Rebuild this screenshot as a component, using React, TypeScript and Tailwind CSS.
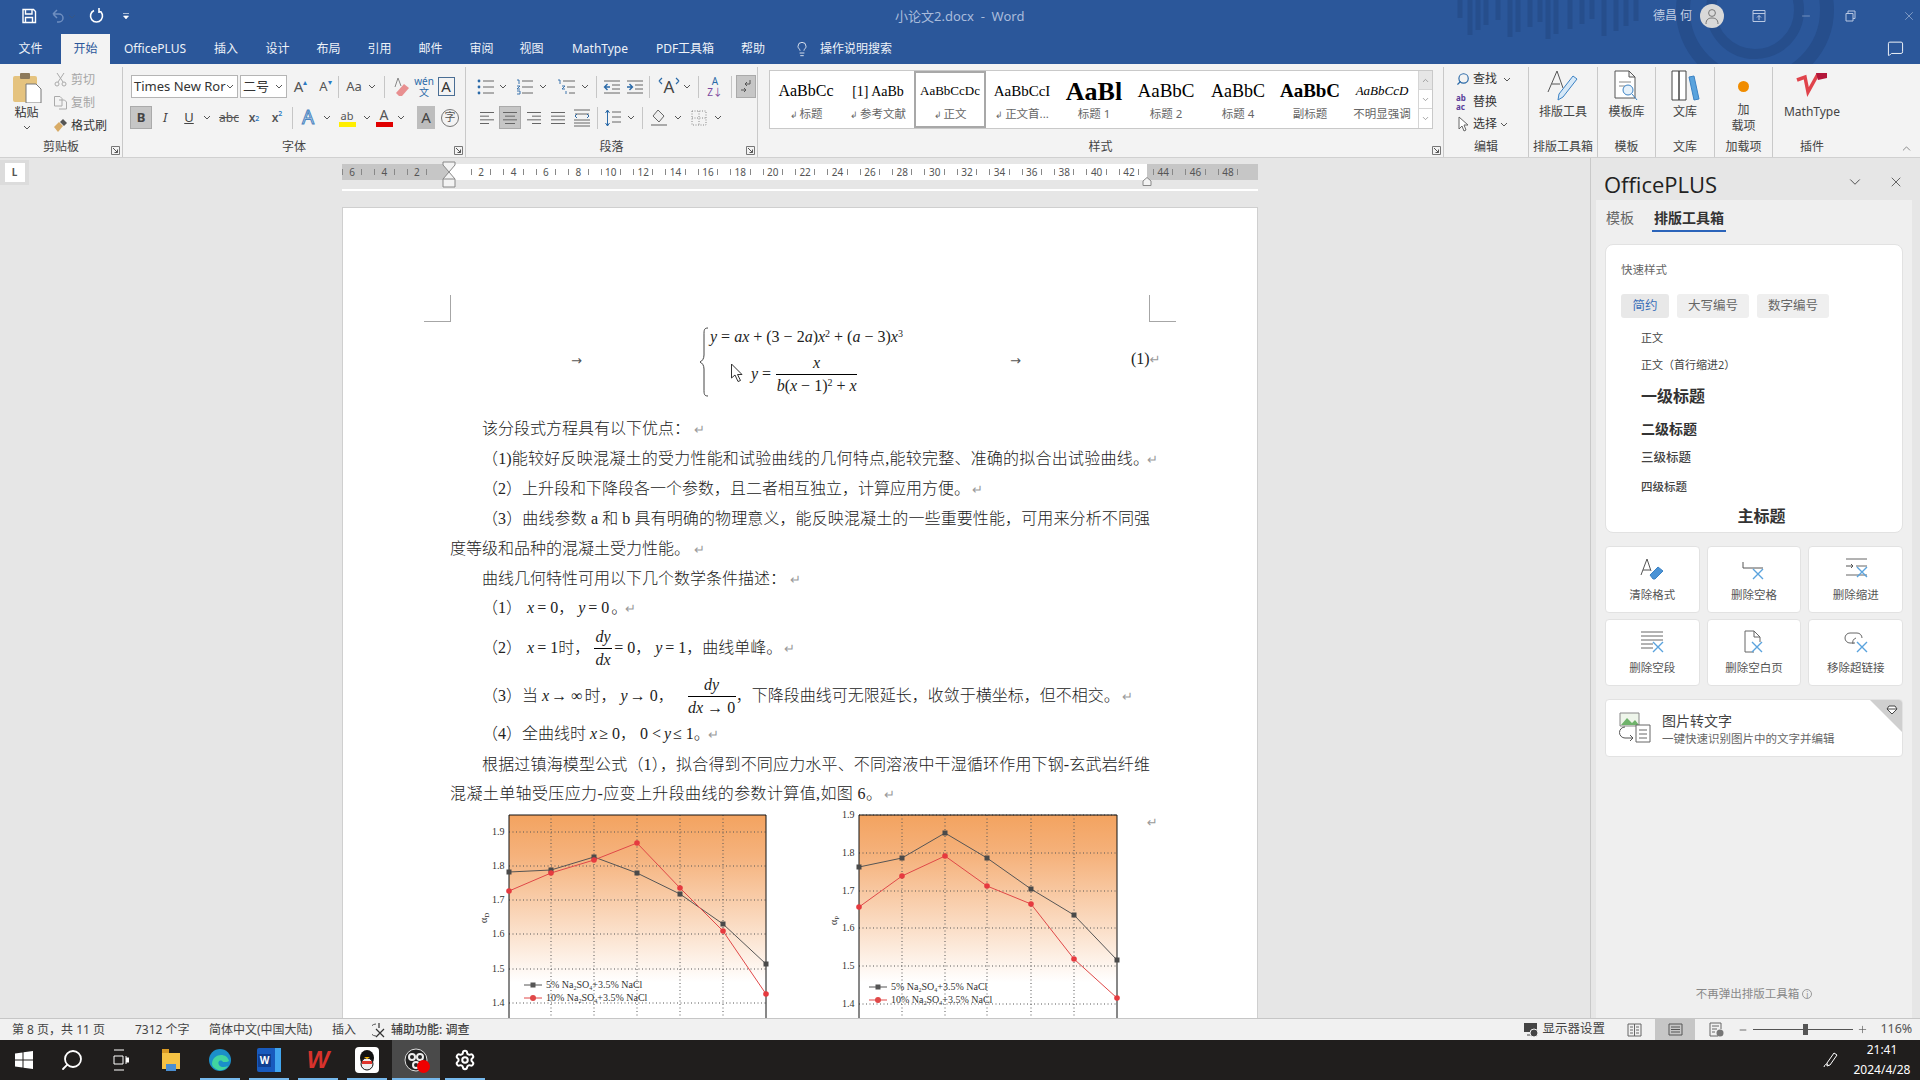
import React from 'react';
import { ChevronDown, ChevronUp, Lightbulb, MessageSquare, Minus, Plus, Search, Settings, X } from 'lucide-react';

const serif = "[font-family:'Liberation_Serif','Noto_Sans_CJK_SC',serif]";

const Chev: React.FC<{ className?: string }> = ({ className = '' }) => (
  <svg width="8" height="5" viewBox="0 0 8 5" className={className}><path d="M1 1l3 3 3-3" fill="none" stroke="#555" strokeWidth="1" /></svg>
);

const Cell: React.FC<{ className?: string; children?: React.ReactNode }> = ({ className = '', children }) => (
  <div className={`h-[23px] shrink-0 flex items-center justify-center ${className}`}>{children}</div>
);

const Sep = () => <div className="w-px h-[22px] bg-[#c6c6c6] shrink-0" />;

const Lines: React.FC<{ rows: [number, number][]; color?: string }> = ({ rows, color = '#666' }) => (
  <svg width="16" height="16" viewBox="0 0 16 16">
    {rows.map(([a, b], i) => (
      <path key={i} d={`M${a} ${2.5 + i * (11 / (rows.length - 1))}H${b}`} stroke={color} strokeWidth="1" />
    ))}
  </svg>
);

const Launcher = () => (
  <svg width="9" height="9" viewBox="0 0 9 9" className="absolute right-[2px] bottom-[2px]">
    <path d="M.5 .5H8.5V8.5H.5Z" fill="none" stroke="#777" />
    <path d="M2 2l4.5 4.5M6.5 3.5v3h-3" fill="none" stroke="#555" />
  </svg>
);

const Group: React.FC<{ className: string; label: string; launcher?: boolean; children: React.ReactNode }> = ({ className, label, launcher, children }) => (
  <div className={`relative shrink-0 h-full flex flex-col border-r border-[#c9c9c9] ${className}`}>
    <div className="flex-1 min-h-0">{children}</div>
    <div className="h-[20px] shrink-0 text-center text-[12px] leading-[20px] text-[#444]">{label}</div>
    {launcher && <Launcher />}
  </div>
);

const StyleItem: React.FC<{ preview: string; label: string; mark?: boolean; selected?: boolean; previewClass?: string }> = ({ preview, label, mark, selected, previewClass = 'text-[15px]' }) => (
  <div className={`w-[72px] h-full shrink-0 flex flex-col items-center overflow-hidden ${selected ? 'border-2 border-[#a8a8a8]' : 'border-2 border-transparent'}`}>
    <div className={`h-[30px] mt-[3px] w-[64px] overflow-hidden whitespace-nowrap flex items-center justify-center text-black ${serif} ${previewClass}`}>{preview}</div>
    <div className="text-[11.5px] leading-[16px] whitespace-nowrap text-[#666]">{mark && <span className="text-[9px] mr-[2px]">↲</span>}{label}</div>
  </div>
);

const BigBtn: React.FC<{ icon: React.ReactNode; children: React.ReactNode }> = ({ icon, children }) => (
  <div className="h-full flex flex-col items-center pt-[3px]">
    <div className="h-[32px] flex items-end justify-center">{icon}</div>
    <div className="mt-[2px] text-[12px] leading-[15px] text-[#444] text-center whitespace-nowrap">{children}</div>
  </div>
);

const TABS = [
  ['文件', 'w-[61px]'], ['开始', 'w-[49px]'], ['OfficePLUS', 'w-[90px]'], ['插入', 'w-[52px]'], ['设计', 'w-[51px]'], ['布局', 'w-[51px]'],
  ['引用', 'w-[51px]'], ['邮件', 'w-[51px]'], ['审阅', 'w-[51px]'], ['视图', 'w-[49px]'], ['MathType', 'w-[88px]'], ['PDF工具箱', 'w-[82px]'], ['帮助', 'w-[54px]'],
];

const TitleBar = () => (
  <div className="relative h-[64px] shrink-0 bg-[#2b579a] text-white">
    <svg width="460" height="64" viewBox="0 0 460 64" className="absolute left-[1420px] top-0">
      <g stroke="#264e8c" fill="none">
        {[40, 50, 58, 66, 78, 90, 98, 110, 120, 128, 136, 150, 162, 172, 184, 196, 206, 216].map((x, i) => (
          <path key={x} d={`M${x} 0V${18 + ((i * 17) % 22)}`} strokeWidth="5" />
        ))}
        <circle cx="335" cy="10" r="72" strokeWidth="14" />
        <circle cx="335" cy="10" r="44" strokeWidth="10" />
      </g>
    </svg>
    <div className="relative h-[32px] flex items-center">
      <svg width="16" height="16" viewBox="0 0 16 16" className="ml-[21px]"><path d="M2 1.5H12.5L14.5 3.5V14.5H2ZM4.5 1.5V6H11V1.5M4.5 14.5V9.5H11.5V14.5" fill="none" stroke="#fff" strokeWidth="1.4" /></svg>
      <svg width="16" height="16" viewBox="0 0 16 16" className="ml-[13px]"><path d="M3 6l4-4M3 6l4 4M3 6h6a4 4 0 0 1 0 8H7" fill="none" stroke="#6f8fc0" strokeWidth="1.5" /></svg>
      <Chev className="ml-[2px] opacity-30" />
      <svg width="16" height="18" viewBox="0 0 16 18" className="ml-[13px]"><path d="M5 3.5a6 6 0 1 0 5 0M10 1v5" fill="none" stroke="#fff" strokeWidth="1.6" /></svg>
      <svg width="8" height="8" viewBox="0 0 8 8" className="ml-[17px]"><path d="M1 1.5H7M1.5 4H6.5L4 7Z" fill="#fff" stroke="#fff" strokeWidth=".6" /></svg>
      <div className="ml-[765px] mt-[1px] text-[13px] text-[#a9bcdc] whitespace-nowrap w-[125px] text-center">小论文2.docx&nbsp; -&nbsp; Word</div>
      <div className="ml-[625px] text-[12px] text-[#c3cfe4] w-[55px] text-center whitespace-nowrap">德昌 何</div>
      <div className="w-[24px] h-[24px] rounded-full bg-[#d9d9d9] flex items-center justify-center">
        <svg width="16" height="18" viewBox="0 0 16 18"><circle cx="8" cy="6" r="3.4" fill="none" stroke="#777" /><path d="M2 17c0-5 3-6 6-6s6 1 6 6" fill="none" stroke="#777" /></svg>
      </div>
      <svg width="14" height="14" viewBox="0 0 14 14" className="ml-[28px]"><path d="M1 1.5H13V12.5H1ZM1 4.5H13M7 11V6.5M5 8.5l2-2 2 2" fill="none" stroke="#b9c8e2" /></svg>
      <Minus size={12} strokeWidth={1} className="ml-[34px] text-[#b9c8e2]" />
      <svg width="11" height="12" viewBox="0 0 11 12" className="ml-[33px]"><path d="M1 3.5H8V11H1ZM3 3.5V1H10V8.5H8" fill="none" stroke="#b9c8e2" /></svg>
      <X size={14} strokeWidth={1} className="ml-[46px] text-[#b9c8e2]" />
    </div>
    <div className="relative h-[32px] flex items-end text-[12px]">
      {TABS.map(([t, w], i) => (
        <div key={t} className={`${w} h-[30px] shrink-0 flex items-center justify-center whitespace-nowrap ${i === 1 ? 'bg-[#f3f3f3] text-[#2b579a]' : 'text-[#eef2f8]'}`}>{t}</div>
      ))}
      <Lightbulb size={16} strokeWidth={1.2} className="ml-[14px] mb-[7px] text-white" />
      <div className="ml-[10px] h-[30px] flex items-center text-[#eef2f8] whitespace-nowrap">操作说明搜索</div>
      <MessageSquare size={17} strokeWidth={1.3} className="ml-[995px] mb-[7px] text-white" />
    </div>
  </div>
);

const ClipboardGroup = () => (
  <Group className="w-[123px]" label="剪贴板" launcher>
    <div className="flex h-full">
      <div className="w-[53px] flex flex-col items-center pt-[6px]">
        <svg width="30" height="30" viewBox="0 0 30 30">
          <rect x="1" y="3" width="24" height="26" rx="2" fill="#e5c37f" />
          <rect x="8" y="0" width="10" height="6" rx="1" fill="#8d7a5c" />
          <path d="M14 11H24L29 16V30H14Z" fill="#fff" stroke="#777" />
        </svg>
        <div className="text-[12px] leading-[16px] mt-[2px] text-[#333]">粘贴</div>
        <Chev className="mt-[4px]" />
      </div>
      <div className="flex flex-col pt-[1px] text-[12px] text-[#a6a6a6]">
        <div className="h-[23px] flex items-center gap-[3px]"><svg width="15" height="15" viewBox="0 0 15 15"><path d="M4 1l6 9M11 1L5 10" stroke="#aaa" /><circle cx="4" cy="12" r="2" fill="none" stroke="#aaa" /><circle cx="11" cy="12" r="2" fill="none" stroke="#aaa" /></svg>剪切</div>
        <div className="h-[23px] flex items-center gap-[3px]"><svg width="15" height="15" viewBox="0 0 15 15"><path d="M1.5 1.5H7L9 3.5V11H1.5ZM6 5H11.5L13.500 7V14H6" fill="#f3f3f3" stroke="#aaa" /></svg>复制</div>
        <div className="h-[23px] flex items-center gap-[3px] text-[#333]"><svg width="15" height="15" viewBox="0 0 15 15"><path d="M1 9l5-5 4 4-5 6z" fill="#d8ab66" /><path d="M7 4l3-3 4 4-3 3z" fill="#555" /></svg>格式刷</div>
      </div>
    </div>
  </Group>
);

const FontGroup = () => (
  <Group className="w-[343px]" label="字体" launcher>
    <div className="flex items-center pl-[8px] pt-[8px]">
      <div className="w-[107px] h-[23px] bg-white border border-[#b5b5b5] flex items-center justify-between pl-[2px] pr-[3px] text-[13px] text-[#333] whitespace-nowrap overflow-hidden">Times New Ror<Chev /></div>
      <div className="w-[47px] h-[23px] ml-[2px] bg-white border border-[#b5b5b5] flex items-center justify-between pl-[2px] pr-[3px] text-[13px] text-[#333]">二号<Chev /></div>
      <Cell className="w-[25px] ml-[1px] text-[15px] text-[#555]">A<span className="text-[8px] text-[#2b79c2] -mt-[10px]">▴</span></Cell>
      <Cell className="w-[25px] text-[13px] text-[#555]">A<span className="text-[8px] text-[#2b79c2] -mt-[10px]">▾</span></Cell>
      <Sep />
      <div className="w-[3px]" />
      <Cell className="w-[24px] text-[13px] text-[#555]">Aa</Cell>
      <Cell className="w-[12px]"><Chev /></Cell>
      <div className="w-[6px]" /><Sep /><div className="w-[6px]" />
      <Cell className="w-[22px]">
        <svg width="18" height="20" viewBox="0 0 18 20"><path d="M2 10L5 1L8 9" fill="none" stroke="#888" /><path d="M3 16l8-9 5 4-7 8H6z" fill="#e88f90" /></svg>
      </Cell>
      <Cell className="w-[22px] flex-col text-[#2b6aa8]"><span className="text-[10px] leading-[11px]">wén</span><span className="text-[10px] leading-[11px]">文</span></Cell>
      <Cell className="w-[22px]"><div className="w-[17px] h-[19px] border border-[#4a6e94] flex items-center justify-center text-[15px] text-[#333]">A</div></Cell>
    </div>
    <div className="flex items-center pl-[7px] mt-[8px]">
      <Cell className="w-[22px] bg-[#c6c6c6] border border-[#aaa] text-[13px] font-bold text-[#444]">B</Cell>
      <Cell className="w-[26px] italic text-[13px] text-[#444]">I</Cell>
      <Cell className="w-[22px] underline text-[13px] text-[#444]">U</Cell>
      <Cell className="w-[14px]"><Chev /></Cell>
      <Cell className="w-[30px] line-through text-[12px] text-[#555]">abc</Cell>
      <Cell className="w-[20px] text-[12px] font-semibold text-[#555]">x<sub className="text-[7px] text-[#2b79c2]">2</sub></Cell>
      <Cell className="w-[26px] text-[12px] font-semibold text-[#555]">x<sup className="text-[7px] text-[#2b79c2]">2</sup></Cell>
      <div className="w-[2px]" /><Sep /><div className="w-[4px]" />
      <Cell className="w-[22px] text-[19px] leading-none text-[#dceaf8] [-webkit-text-stroke:1px_#4a84c0]">A</Cell>
      <Cell className="w-[15px]"><Chev /></Cell>
      <Cell className="w-[26px] flex-col leading-[13px] text-[11px] text-[#555]">ab<div className="w-[17px] h-[5px] bg-[#ffee00]" /></Cell>
      <Cell className="w-[14px]"><Chev /></Cell>
      <Cell className="w-[20px] flex-col leading-[14px] text-[14px] text-[#555]">A<div className="w-[17px] h-[5px] bg-[#e00000]" /></Cell>
      <Cell className="w-[14px]"><Chev /></Cell>
      <div className="w-[9px]" />
      <Cell className="w-[18px] bg-[#bdbdbd] text-[15px] text-[#444]">A</Cell>
      <div className="w-[3px]" />
      <Cell className="w-[24px]"><div className="w-[18px] h-[18px] rounded-full border border-[#777] flex items-center justify-center text-[11px] text-[#555]">字</div></Cell>
    </div>
  </Group>
);

const ParagraphGroup = () => (
  <Group className="w-[292px]" label="段落" launcher>
    <div className="flex items-center pl-[11px] pt-[8px]">
      <Cell className="w-[18px]"><svg width="18" height="16" viewBox="0 0 18 16"><circle cx="2" cy="2" r="1.4" fill="#2b6aa8" /><circle cx="2" cy="8" r="1.4" fill="#2b6aa8" /><circle cx="2" cy="14" r="1.4" fill="#2b6aa8" /><path d="M6 2H17M6 8H17M6 14H17" stroke="#666" /></svg></Cell>
      <Cell className="w-[16px]"><Chev /></Cell>
      <div className="w-[4px]" />
      <Cell className="w-[20px]"><svg width="18" height="16" viewBox="0 0 18 16"><path d="M1 1H3V5M1 7H4L1 10H4M1 12H4V15H1" fill="none" stroke="#2b6aa8" strokeWidth=".9" /><path d="M6 2H17M6 8H17M6 14H17" stroke="#666" /></svg></Cell>
      <Cell className="w-[16px]"><Chev /></Cell>
      <div className="w-[5px]" />
      <Cell className="w-[22px]"><svg width="20" height="16" viewBox="0 0 20 16"><path d="M1 1H3V5M5 7H8L5 10H8M9 12V15" fill="none" stroke="#2b6aa8" strokeWidth=".9" /><path d="M6 2H18M10 8H18M12 14H18" stroke="#666" /></svg></Cell>
      <Cell className="w-[14px]"><Chev /></Cell>
      <div className="w-[4px]" /><Sep /><div className="w-[4px]" />
      <Cell className="w-[21px]"><svg width="18" height="16" viewBox="0 0 18 16"><path d="M1 2H17M9 6H17M9 10H17M1 14H17" stroke="#666" /><path d="M7 8H2M4.5 5L1.5 8l3 3" fill="none" stroke="#2b6aa8" strokeWidth="1.4" /></svg></Cell>
      <div className="w-[2px]" />
      <Cell className="w-[21px]"><svg width="18" height="16" viewBox="0 0 18 16"><path d="M1 2H17M9 6H17M9 10H17M1 14H17" stroke="#666" /><path d="M1 8H6M3.5 5l3 3-3 3" fill="none" stroke="#2b6aa8" strokeWidth="1.4" /></svg></Cell>
      <div className="w-[4px]" /><Sep /><div className="w-[8px]" />
      <Cell className="w-[22px] relative text-[17px] text-[#444]">A<svg width="22" height="8" viewBox="0 0 22 8" className="absolute top-[2px] left-0"><path d="M1 4l3-3M1 4l3 3M21 4l-3-3M21 4l-3 3" fill="none" stroke="#2b6aa8" strokeWidth="1.2" /></svg></Cell>
      <Cell className="w-[14px]"><Chev /></Cell>
      <div className="w-[4px]" /><Sep /><div className="w-[5px]" />
      <Cell className="w-[22px] flex-col text-[10px] text-[#2b6aa8]"><span className="leading-[11px]">A</span><span className="leading-[11px] text-[#7a4aa0]">Z↓</span></Cell>
      <div className="w-[5px]" /><Sep /><div className="w-[4px]" />
      <Cell className="w-[20px] bg-[#c6c6c6] border border-[#aaa]"><svg width="14" height="16" viewBox="0 0 14 16"><path d="M11 1V5H6M8 3L6 5l2 2M2 11H7M5 9l2 2-2 2" fill="none" stroke="#555" /></svg></Cell>
    </div>
    <div className="flex items-center pl-[10px] mt-[8px]">
      <Cell className="w-[22px]"><Lines rows={[[1, 15], [1, 10], [1, 15], [1, 10]]} /></Cell>
      <div className="w-[1px]" />
      <Cell className="w-[22px] bg-[#c6c6c6] border border-[#aaa]"><Lines rows={[[1, 15], [3, 13], [1, 15], [3, 13]]} /></Cell>
      <div className="w-[2px]" />
      <Cell className="w-[22px]"><Lines rows={[[1, 15], [6, 15], [1, 15], [6, 15]]} /></Cell>
      <div className="w-[2px]" />
      <Cell className="w-[22px]"><Lines rows={[[1, 15], [1, 15], [1, 15], [1, 15]]} /></Cell>
      <div className="w-[2px]" />
      <Cell className="w-[22px]"><svg width="18" height="18" viewBox="0 0 18 18"><path d="M1 1H17M1 11H17M1 14H17M1 17H17M2 5H16" stroke="#666" /><path d="M4 5l-2 2 2 2M14 5l2 2-2 2" fill="none" stroke="#2b6aa8" /></svg></Cell>
      <div className="w-[4px]" /><Sep /><div className="w-[4px]" />
      <Cell className="w-[22px]"><svg width="18" height="18" viewBox="0 0 18 18"><path d="M8 3H17M8 8H17M8 13H17" stroke="#666" /><path d="M3.5 1V17M1.5 4l2-3 2 3M1.5 14l2 3 2-3" fill="none" stroke="#2b6aa8" /></svg></Cell>
      <Cell className="w-[14px]"><Chev /></Cell>
      <div className="w-[4px]" /><Sep /><div className="w-[3px]" />
      <Cell className="w-[24px] justify-end"><svg width="20" height="18" viewBox="0 0 20 18"><path d="M8 1l6 6-5 6-6-6z" fill="#eee" stroke="#666" /><path d="M1 16H17" stroke="#aaa" strokeWidth="2" /></svg></Cell>
      <Cell className="w-[16px]"><Chev /></Cell>
      <div className="w-[2px]" />
      <Cell className="w-[22px]"><svg width="16" height="16" viewBox="0 0 16 16"><path d="M1 1H15V15H1ZM8 1V15M1 8H15" fill="none" stroke="#888" strokeDasharray="1 1.5" /></svg></Cell>
      <Cell className="w-[16px]"><Chev /></Cell>
    </div>
  </Group>
);

const StylesGroup = () => (
  <Group className="w-[686px]" label="样式" launcher>
    <div className="ml-[11px] mt-[3px] w-[664px] h-[59px] bg-white border border-[#c9c9c9] flex">
      <StyleItem preview="AaBbCc" label="标题" mark previewClass="text-[16px]" />
      <StyleItem preview="[1]  AaBb" label="参考文献" mark previewClass="text-[14px]" />
      <StyleItem preview="AaBbCcDc" label="正文" mark selected previewClass="text-[13px]" />
      <StyleItem preview="AaBbCcI" label="正文首..." mark previewClass="text-[15px]" />
      <StyleItem preview="AaBl" label="标题 1" previewClass="text-[26px] font-bold" />
      <StyleItem preview="AaBbC" label="标题 2" previewClass="text-[19px]" />
      <StyleItem preview="AaBbC" label="标题 4" previewClass="text-[18px]" />
      <StyleItem preview="AaBbC" label="副标题" previewClass="text-[19px] font-bold" />
      <StyleItem preview="AaBbCcD" label="不明显强调" previewClass="text-[13px] italic text-[#666]" />
      <div className="ml-auto w-[15px] border-l border-[#d5d5d5] flex flex-col text-[#888]">
        <div className="h-[19px] bg-[#e6e6e6] flex items-center justify-center border-b border-[#d5d5d5]"><ChevronUp size={9} /></div>
        <div className="h-[19px] flex items-center justify-center border-b border-[#d5d5d5]"><ChevronDown size={9} /></div>
        <div className="h-[19px] flex items-center justify-center"><ChevronDown size={9} /></div>
      </div>
    </div>
  </Group>
);

const EditGroup = () => (
  <Group className="w-[85px]" label="编辑">
    <div className="flex flex-col pt-[1px] pl-[12px] text-[12px] text-[#333]">
      <div className="h-[22px] flex items-center gap-[3px]"><Search size={14} strokeWidth={2} className="text-[#2b6aa8] -scale-x-100" />查找<Chev className="ml-[3px]" /></div>
      <div className="h-[23px] flex items-center gap-[3px]"><span className="w-[14px] text-[8px] leading-[9px] text-[#5a3d9a] font-bold">ab<br />ac</span>替换</div>
      <div className="h-[22px] flex items-center gap-[3px]"><svg width="14" height="16" viewBox="0 0 14 16"><path d="M3 1V13L6 10L8 15L10 14L8 9H12Z" fill="#fff" stroke="#666" /></svg>选择<Chev /></div>
    </div>
  </Group>
);

const RibbonAddins = () => (
  <>
    <Group className="w-[69px]" label="排版工具箱">
      <BigBtn icon={<svg width="34" height="32" viewBox="0 0 34 32"><path d="M2 22L11 1L17 18" fill="none" stroke="#555" /><path d="M6 14H14" stroke="#555" /><path d="M27 6l4 3-14 18-5 3 1-6z" fill="#d6e8f7" stroke="#3b82c4" /></svg>}>排版工具</BigBtn>
    </Group>
    <Group className="w-[58px]" label="模板">
      <BigBtn icon={<svg width="28" height="32" viewBox="0 0 28 32"><path d="M2 1H16L22 7V28H2ZM16 1V7H22" fill="#fff" stroke="#555" /><path d="M6 12H18M6 16H12" stroke="#888" /><circle cx="15" cy="20" r="5" fill="#e6f1fa" stroke="#3b82c4" /><path d="M19 24l5 6" stroke="#3b82c4" /></svg>}>模板库</BigBtn>
    </Group>
    <Group className="w-[59px]" label="文库">
      <BigBtn icon={<svg width="30" height="32" viewBox="0 0 30 32"><path d="M2 1H9V30H2ZM9 1H16V30H9Z" fill="#fff" stroke="#444" /><path d="M19 7l5-1 5 23-5 1z" fill="#5aa3dd" stroke="#3b82c4" /></svg>}>文库</BigBtn>
    </Group>
    <Group className="w-[58px]" label="加载项">
      <div className="flex flex-col items-center pt-[14px] text-[12px] leading-[16px] text-[#444]">
        <div className="w-[11px] h-[11px] rounded-full bg-[#f08c00] mb-[10px]" />
        <span>加</span><span>载项</span>
      </div>
    </Group>
    <Group className="w-[78px] border-r-0" label="插件">
      <BigBtn icon={<svg width="36" height="32" viewBox="0 0 36 32"><path d="M3 10L11 7L14 22L24 4" fill="none" stroke="#e0434b" strokeWidth="3.5" /><path d="M22 3H33V8L24 10Z" fill="#b3163a" /></svg>}>MathType</BigBtn>
    </Group>
  </>
);

const Ribbon = () => (
  <div className="relative h-[94px] shrink-0 bg-[#f3f3f3] border-b border-[#d0d0d0] flex pt-[3px]">
    <ClipboardGroup />
    <FontGroup />
    <ParagraphGroup />
    <StylesGroup />
    <EditGroup />
    <RibbonAddins />
    <ChevronUp size={13} strokeWidth={1.2} className="absolute right-[7px] bottom-[2px] text-[#555]" />
  </div>
);

const RulerCell: React.FC<{ n: number }> = ({ n }) => (
  <div className="w-[32.4px] shrink-0 flex items-center justify-between px-[6px] text-[10px] text-[#555]">
    <div className="w-px h-[6px] bg-[#888]" />
    <span className="leading-none">{n}</span>
    <div className="w-px h-[6px] bg-[#888]" />
  </div>
);

const Ruler = () => (
  <div className="relative w-[916px] h-[16px] flex">
    <div className="w-[107px] bg-[#c6c6c6] flex justify-end pr-[16px]">
      {[6, 4, 2].map(n => <RulerCell key={n} n={n} />)}
    </div>
    <div className="w-[698px] bg-white flex pl-[16px] overflow-hidden">
      {Array.from({ length: 21 }, (_, i) => (i + 1) * 2).map(n => <RulerCell key={n} n={n} />)}
    </div>
    <div className="flex-1 bg-[#c6c6c6] flex">
      {[44, 46, 48].map(n => <RulerCell key={n} n={n} />)}
    </div>
    <svg width="14" height="27" viewBox="0 0 14 27" className="absolute left-[100px] -top-[3px]">
      <path d="M1 1H13V4L7 11L1 4ZM7 11L13 18V26H1V18ZM1 18H13" fill="#f3f3f3" stroke="#888" />
    </svg>
    <svg width="10" height="9" viewBox="0 0 10 9" className="absolute left-[800px] top-[13px]">
      <path d="M5 .5L9 4V8.500H1V4Z" fill="#f3f3f3" stroke="#888" />
    </svg>
    <div className="absolute left-0 right-0 -bottom-[11px] h-[2px] bg-white" />
  </div>
);

const Ret: React.FC<{ className?: string }> = ({ className = '' }) => (
  <span className={`text-[#9a9a9a] text-[13px] leading-none [font-family:'DejaVu_Sans',sans-serif] ${className}`}>↵</span>
);

const M: React.FC<{ className?: string; children: React.ReactNode }> = ({ className = '', children }) => (
  <span className={`italic text-[16px] text-[#222] ${className}`}>{children}</span>
);

const N: React.FC<{ className?: string; children: React.ReactNode }> = ({ className = '', children }) => (
  <span className={`text-[16px] text-[#222] ${className}`}>{children}</span>
);

const Frac: React.FC<{ top: React.ReactNode; bottom: React.ReactNode; className?: string }> = ({ top, bottom, className = '' }) => (
  <span className={`inline-flex flex-col items-center shrink-0 ${className}`}>
    <span className="leading-[21px] h-[22px] whitespace-nowrap">{top}</span>
    <span className="self-stretch h-px bg-black" />
    <span className="leading-[22px] h-[22px] whitespace-nowrap">{bottom}</span>
  </span>
);

const Equation = () => (
  <div className="relative h-[89px] flex items-center text-[#222]">
    <span className="absolute left-[228px] top-[26px] text-[13px] text-[#555] [font-family:'DejaVu_Sans',sans-serif]">→</span>
    <div className="ml-[356px] flex items-stretch h-[70px] mt-[-16px]">
      <svg width="10" height="70" viewBox="0 0 10 70"><path d="M9 1C5 1 5 3 5 8V28C5 32 3 34 1 35C3 36 5 38 5 42V62C5 67 5 69 9 69" fill="none" stroke="#444" /></svg>
      <div className="flex flex-col pl-[1px]">
        <div className="h-[25px] -mt-[3px] text-[16px] whitespace-nowrap leading-[25px]"><i>y</i> = <i>ax</i> + (3 − 2<i>a</i>)<i>x</i><sup className="text-[10px]">2</sup> + (<i>a</i> − 3)<i>x</i><sup className="text-[10px]">3</sup></div>
        <div className="flex items-center mt-[3px] ml-[41px] text-[16px]">
          <span className="whitespace-nowrap mr-[5px]"><i>y</i> =</span>
          <Frac className="w-[81px]" top={<i>x</i>} bottom={<><i>b</i>(<i>x</i> − 1)<sup className="text-[10px]">2</sup> + <i>x</i></>} />
        </div>
      </div>
    </div>
    <span className="absolute left-[667px] top-[26px] text-[13px] text-[#555] [font-family:'DejaVu_Sans',sans-serif]">→</span>
    <span className="absolute left-[788px] top-[22px] text-[16px]">(1)<Ret /></span>
  </div>
);

const Para: React.FC<{ className?: string; children: React.ReactNode }> = ({ className = '', children }) => (
  <div className={`flex items-center whitespace-nowrap text-[16px] font-light text-[#222] ${className}`}>{children}</div>
);

const DocText = () => (
  <div className="pl-[107px] w-[815px]">
    <Para className="h-[30px] pl-[32px]">该分段式方程具有以下优点：<Ret className="ml-[4px]" /></Para>
    <Para className="h-[30px] pl-[32px]"><span className="w-[668px] [text-align-last:justify]">（1)能较好反映混凝土的受力性能和试验曲线的几何特点,能较完整、准确的拟合出试验曲线。</span><Ret className="ml-[-2px]" /></Para>
    <Para className="h-[30px] pl-[32px]">（2）上升段和下降段各一个参数，且二者相互独立，计算应用方便。<Ret className="ml-[2px]" /></Para>
    <Para className="h-[30px] pl-[32px]"><span className="w-[668px] [text-align-last:justify]">（3）曲线参数 a 和 b 具有明确的物理意义，能反映混凝土的一些重要性能，可用来分析不同强</span></Para>
    <Para className="h-[30px]">度等级和品种的混凝土受力性能。<Ret className="ml-[4px]" /></Para>
    <Para className="h-[30px] pl-[32px]">曲线几何特性可用以下几个数学条件描述：<Ret className="ml-[4px]" /></Para>
    <Para className="h-[28px] pl-[32px]">（1）<M className={`ml-[5px] ${serif}`}>x</M><N className={`ml-[3px] ${serif}`}>= 0</N>，<M className={`ml-[4px] ${serif}`}>y</M><N className={`ml-[3px] ${serif}`}>= 0</N><span className="ml-[2px]">。</span><Ret className="ml-[-2px]" /></Para>
    <Para className="h-[52px] pl-[32px]">（2）<M className={`ml-[5px] ${serif}`}>x</M><N className={`ml-[3px] ${serif}`}>= 1</N>时，
      <Frac className={`w-[18px] ml-[4px] text-[16px] italic ${serif}`} top="dy" bottom="dx" /><N className={`ml-[2px] ${serif}`}>= 0</N>，<M className={`ml-[4px] ${serif}`}>y</M><N className={`ml-[3px] ${serif}`}>= 1</N>，曲线单峰。<Ret className="ml-[2px]" /></Para>
    <Para className="h-[44px] pl-[32px]">（3）当<M className={`ml-[4px] ${serif}`}>x</M><N className={`mx-[2px] ${serif}`}>→ ∞</N>时，<M className={`ml-[4px] ${serif}`}>y</M><N className={`ml-[2px] ${serif}`}>→ 0</N>，
      <Frac className={`w-[48px] ml-[14px] text-[16px] ${serif}`} top={<i>dy</i>} bottom={<><i>dx</i> → 0</>} />，下降段曲线可无限延长，收敛于横坐标，但不相交。<Ret className="ml-[2px]" /></Para>
    <Para className="h-[32px] pl-[32px]">（4）全曲线时<M className={`ml-[4px] ${serif}`}>x</M><N className={`ml-[2px] ${serif}`}>≥ 0</N>，<N className={`ml-[4px] ${serif}`}>0 &lt;</N><M className={`ml-[3px] ${serif}`}>y</M><N className={`ml-[2px] ${serif}`}>≤ 1</N>。<Ret className="ml-[-2px]" /></Para>
    <Para className="h-[30px] pl-[32px]"><span className="w-[668px] [text-align-last:justify]">根据过镇海模型公式（1），拟合得到不同应力水平、不同溶液中干湿循环作用下钢-玄武岩纤维</span></Para>
    <Para className="h-[28px]"><span className="w-[432px] [text-align-last:justify]">混凝土单轴受压应力-应变上升段曲线的参数计算值,如图 6。</span><Ret className="ml-[2px]" /></Para>
  </div>
);

type ChartProps = {
  id: string; xs: number[]; black: number[]; red: number[]; ticks: number[]; axis: string; axisY: number; legX: number; legY: number; labelX: number;
};

const Legend: React.FC<{ x: number; y: number; label: string; color: string; circle?: boolean }> = ({ x, y, label, color, circle }) => (
  <g>
    <path d={`M${x} ${y}H${x + 18}`} stroke={color} />
    {circle ? <circle cx={x + 9} cy={y} r="3" fill={color} /> : <rect x={x + 6.5} y={y - 2.5} width="5" height="5" fill={color} />}
    <text x={x + 22} y={y + 3} fontSize="10" fill="#333" fontFamily="Liberation Serif">{label}<tspan fontSize="6" dy="2">2</tspan><tspan dy="-2">SO</tspan><tspan fontSize="6" dy="2">4</tspan><tspan dy="-2">+3.5% NaCl</tspan></text>
  </g>
);

const Chart: React.FC<ChartProps> = ({ id, xs, black, red, ticks, axis, axisY, legX, legY, labelX }) => {
  const w = xs[xs.length - 1];
  const pts = (ys: number[]) => ys.map((y, i) => `${xs[i]},${y}`).join(' ');
  return (
    <svg width="300" height="204" viewBox="-39 -1 300 204" className="shrink-0 overflow-visible">
      <defs>
        <linearGradient id={id} x1="0" y1="0" x2="0" y2="1">
          <stop offset="0" stopColor="#f3a360" />
          <stop offset=".2" stopColor="#f5b27c" />
          <stop offset=".82" stopColor="#ffffff" />
        </linearGradient>
      </defs>
      <rect x="0" y="0" width={w} height="204" fill={`url(#${id})`} />
      {xs.slice(1, -1).map(x => <path key={x} d={`M${x} 0V204`} stroke="#555" strokeDasharray="1 2.5" />)}
      {ticks.map(y => <path key={y} d={`M0 ${y}H${w}`} stroke="#555" strokeDasharray="1 2.5" />)}
      <path d={`M0 204V0H${w}V204`} fill="none" stroke="#111" />
      {ticks.map((y, i) => (
        <text key={y} x={labelX} y={y + 3} fontSize="10" fill="#333" fontFamily="Liberation Serif">{(1.9 - i / 10).toFixed(1)}</text>
      ))}
      <text x="-22" y={axisY} fontSize="10" fill="#333" fontFamily="Liberation Serif" transform={`rotate(-90 -22 ${axisY})`}>α<tspan fontSize="7" dy="2">{axis}</tspan></text>
      <polyline points={pts(black)} fill="none" stroke="#555" />
      <polyline points={pts(red)} fill="none" stroke="#e04848" />
      {black.map((y, i) => <rect key={i} x={xs[i] - 2.5} y={y - 2.5} width="5" height="5" fill="#4a4a4a" />)}
      {red.map((y, i) => <circle key={i} cx={xs[i]} cy={y} r="2.8" fill="#e63a3f" />)}
      <Legend x={legX} y={legY} label="5% Na" color="#555" />
      <Legend x={legX} y={legY + 13} label="10% Na" color="#e04848" circle />
    </svg>
  );
};

const Charts = () => (
  <div className="flex mt-[6px] pl-[127px] gap-[50px] relative">
    <Chart id="g1" xs={[0, 42, 85, 128, 171, 214, 257]} black={[57, 55, 42, 58, 79, 109, 149]} red={[76, 58, 45, 28, 73, 116, 179]}
      ticks={[17, 51, 85, 119, 154, 188]} axis="D" axisY={108} legX={15} legY={170} labelX={-17} />
    <Chart id="g2" xs={[0, 43, 86, 128, 172, 215, 258]} black={[52, 43, 18, 43, 74, 100, 145]} red={[92, 61, 41, 71, 89, 144, 183]}
      ticks={[0, 38, 76, 113, 151, 189]} axis="P" axisY={110} legX={10} legY={172} labelX={-17} />
    <Ret className="absolute left-[804px] top-[2px]" />
  </div>
);

const Page = () => (
  <div className={`relative mt-[11px] flex-1 w-[916px] bg-white border border-b-0 border-[#cfcfcf] overflow-hidden pt-[117px] ${serif}`}>
    <div className="absolute left-[81px] top-[87px] w-[27px] h-[27px] border-r border-b border-[#a6a6a6]" />
    <div className="absolute left-[806px] top-[87px] w-[27px] h-[27px] border-l border-b border-[#a6a6a6]" />
    <Equation />
    <DocText />
    <Charts />
    <svg width="14" height="20" viewBox="0 0 14 20" className="absolute left-[387px] top-[155px]"><path d="M1.5 1V15L5 12L8 18.5L10.5 17.5L7.5 11.5H12Z" fill="#fff" stroke="#333" /></svg>
  </div>
);

const DocArea = () => (
  <div className="relative flex-1 min-w-0 flex flex-col items-start pl-[342px] pt-[6px]">
    <div className="absolute left-0 top-[2px] w-[29px] h-[25px] bg-[#dcdcdc] flex items-center justify-center">
      <div className="w-[20px] h-[19px] bg-white flex items-center justify-center text-[10px] font-bold text-[#555]">L</div>
    </div>
    <Ruler />
    <div className="h-[16px]" />
    <Page />
  </div>
);

const ACTIONS: [string, React.ReactNode][] = [
  ['清除格式', <svg key="a" width="24" height="24" viewBox="0 0 24 24"><path d="M1 18L7 2L11 14" fill="none" stroke="#555" /><path d="M3 13H10" stroke="#555" /><path d="M10 18l8-8 5 4-8 8h-2z" fill="#4a93d6" stroke="#3b82c4" /></svg>],
  ['删除空格', <svg key="b" width="26" height="24" viewBox="0 0 26 24"><path d="M2 5V11H22" fill="none" stroke="#555" /><path d="M12 12l10 10M22 12L12 22" stroke="#5aa3dd" strokeWidth="1.4" /></svg>],
  ['删除缩进', <svg key="c" width="26" height="24" viewBox="0 0 26 24"><path d="M3 2H24M13 9H24M3 18H24" stroke="#666" /><path d="M3 9H10M8 7l2 2-2 2" fill="none" stroke="#555" /><path d="M14 10l10 10M24 10L14 20" stroke="#5aa3dd" strokeWidth="1.4" /></svg>],
  ['删除空段', <svg key="d" width="26" height="24" viewBox="0 0 26 24"><path d="M2 2H24M2 6H24M2 10H24M2 14H14M2 18H14" stroke="#666" /><path d="M14 12l10 10M24 12L14 22" stroke="#5aa3dd" strokeWidth="1.4" /></svg>],
  ['删除空白页', <svg key="e" width="26" height="24" viewBox="0 0 26 24"><path d="M13 22H4V1H13L19 7V12M13 1V7H19" fill="none" stroke="#666" /><path d="M11 12l10 10M21 12L11 22" stroke="#5aa3dd" strokeWidth="1.4" /></svg>],
  ['移除超链接', <svg key="f" width="26" height="24" viewBox="0 0 26 24"><path d="M12 13H7a5 5 0 0 1 0-10h7a5 5 0 0 1 5 5" fill="none" stroke="#666" /><path d="M13 8a5 5 0 0 0-3 6" fill="none" stroke="#666" /><path d="M14 12l10 10M24 12L14 22" stroke="#5aa3dd" strokeWidth="1.4" /></svg>],
];

const TaskPane = () => (
  <div className="w-[330px] shrink-0 border-l border-[#c9c9c9] flex flex-col pl-[5px] pr-[8px]">
    <div className="h-[42px] shrink-0 flex items-center pl-[8px] text-[#222]">
      <span className="text-[22px] leading-none mt-[10px] [font-family:'Open_Sans',sans-serif]">OfficePLUS</span>
      <ChevronDown size={18} strokeWidth={1} className="ml-auto mr-[-1px] mt-[6px]" />
      <X size={16} strokeWidth={1} className="ml-[25px] mr-[8px] mt-[6px]" />
    </div>
    <div className="flex-1 bg-[#efefef] pl-[9px] pr-[9px]">
      <div className="h-[32px] flex items-start pt-[8px] text-[14px] leading-[20px]">
        <span className="text-[#666] ml-px">模板</span>
        <div className="ml-[18px] w-[74px] h-[24px] border-b-2 border-[#2b64ba] text-center font-bold text-[#333]">排版工具箱</div>
      </div>
      <div className="mt-[12px] h-[289px] bg-white rounded-[8px] border border-[#e2e2e2] flex flex-col pl-[15px] text-[#444]">
        <div className="mt-[17px] h-[16px] text-[11.5px] leading-[16px] text-[#666]">快速样式</div>
        <div className="mt-[16px] flex gap-[8px] text-[12.5px]">
          <div className="w-[48px] h-[24px] rounded-[3px] bg-[#e8e8e8] text-[#3a6fb8] flex items-center justify-center">简约</div>
          <div className="w-[72px] h-[24px] rounded-[3px] bg-[#efefef] text-[#666] flex items-center justify-center">大写编号</div>
          <div className="w-[72px] h-[24px] rounded-[3px] bg-[#efefef] text-[#666] flex items-center justify-center">数字编号</div>
        </div>
        <div className="pl-[20px] mt-[8px]">
          <div className="h-[24px] flex items-center text-[11px]">正文</div>
          <div className="h-[30px] flex items-center text-[11px]">正文（首行缩进2）</div>
          <div className="h-[32px] flex items-center text-[16px] font-bold text-[#333]">一级标题</div>
          <div className="h-[32px] flex items-center text-[14px] font-bold text-[#333]">二级标题</div>
          <div className="h-[28px] flex items-center text-[12.5px] font-medium">三级标题</div>
          <div className="h-[30px] flex items-center text-[11.5px] font-medium">四级标题</div>
        </div>
        <div className="h-[28px] flex items-center justify-center text-[16px] font-bold text-[#333]">主标题</div>
      </div>
      <div className="mt-[13px] grid grid-cols-3 gap-x-[7px] gap-y-[6px]">
        {ACTIONS.map(([label, icon]) => (
          <div key={label} className="h-[67px] bg-white rounded-[4px] border border-[#e2e2e2] flex flex-col items-center pt-[8px]">
            <div className="h-[28px] flex items-center justify-center">{icon}</div>
            <div className="mt-[4px] text-[11.5px] leading-[16px] text-[#555] whitespace-nowrap">{label}</div>
          </div>
        ))}
      </div>
      <div className="relative mt-[13px] h-[58px] bg-white rounded-[4px] border border-[#e2e2e2] overflow-hidden flex items-center pl-[13px]">
        <svg width="32" height="32" viewBox="0 0 32 32" className="shrink-0">
          <path d="M1 1H20V14H1Z" fill="#eef5ea" stroke="#888" />
          <path d="M2 13l6-7 5 5 3-3 4 5z" fill="#6fb36b" />
          <path d="M17 13H31V30H17ZM20 18H28M20 22H28M20 26H28" fill="#fff" stroke="#666" />
          <path d="M6 15a5 5 0 0 0 0 11H14M11 23l3 3-3 3" fill="none" stroke="#555" />
        </svg>
        <div className="ml-[11px] flex flex-col">
          <span className="text-[14px] leading-[20px] text-[#444]">图片转文字</span>
          <span className="text-[11.5px] leading-[15px] text-[#666] whitespace-nowrap">一键快速识别图片中的文字并编辑</span>
        </div>
        <div className="absolute right-0 top-0 w-0 h-0 border-l-[32px] border-l-transparent border-t-[32px] border-t-[#cfcfcf]" />
        <svg width="12" height="10" viewBox="0 0 12 10" className="absolute right-[4px] top-[5px]"><path d="M3 1H9L11 4L6 9L1 4ZM1 4H11" fill="#fff" stroke="#444" /></svg>
      </div>
      <div className="mt-[228px] flex justify-center items-center gap-[3px] text-[11.5px] text-[#888]">不再弹出排版工具箱
        <span className="w-[10px] h-[10px] rounded-full border border-[#999] text-[8px] leading-[9px] text-center">i</span>
      </div>
    </div>
  </div>
);

const StatusBar = () => (
  <div className="h-[22px] shrink-0 bg-[#f1f1f1] border-t border-[#c6c6c6] flex items-center text-[12px] text-[#444] whitespace-nowrap">
    <span className="ml-[12px] w-[123px]">第 8 页，共 11 页</span>
    <span className="w-[74px]">7312 个字</span>
    <span className="w-[123px]">简体中文(中国大陆)</span>
    <span className="w-[40px]">插入</span>
    <svg width="15" height="16" viewBox="0 0 15 16"><path d="M4 2a6 6 0 0 0 0 12" fill="none" stroke="#555" /><path d="M7 1V6M4 7l8 8M12 7L4 15" stroke="#333" strokeWidth="1.2" /></svg>
    <span className="ml-[4px] font-medium">辅助功能: 调查</span>
    <svg width="17" height="16" viewBox="0 0 17 16" className="ml-[1054px]"><path d="M1 1H14V10H1Z" fill="#444" /><path d="M4 13H9" stroke="#444" /><circle cx="11" cy="11" r="4" fill="#444" stroke="#f1f1f1" /></svg>
    <span className="ml-[2px] w-[64px] text-[12.5px]">显示器设置</span>
    <svg width="15" height="14" viewBox="0 0 15 14" className="ml-[21px]"><path d="M1 1H7.5V13H1ZM7.5 1H14V13H7.5ZM3 4H6M3 7H6M3 10H6M9 4H12M9 7H12M9 10H12" fill="none" stroke="#666" /></svg>
    <div className="ml-[13px] w-[40px] h-[22px] bg-[#c6c6c6] flex items-center justify-center"><svg width="15" height="13" viewBox="0 0 15 13"><path d="M1 1H14V12H1ZM3 4H12M3 6.500H12M3 9H12" fill="none" stroke="#555" /></svg></div>
    <svg width="15" height="15" viewBox="0 0 15 15" className="ml-[14px]"><path d="M9 14H1V1H12V7M3 4H10M3 7H8M3 10H6" fill="none" stroke="#666" /><circle cx="11" cy="11" r="3.5" fill="#777" /></svg>
    <Minus size={10} className="ml-[14px] text-[#555]" />
    <div className="relative ml-[5px] w-[100px] h-px bg-[#555]"><div className="absolute left-[50px] -top-[5px] w-[5px] h-[11px] bg-[#555]" /></div>
    <Plus size={11} strokeWidth={1.4} className="ml-[4px] text-[#555]" />
    <span className="ml-[12px] text-[12.5px] text-[#555]">116%</span>
  </div>
);

const RUNNING = [
  ['folder', 'w-[40px] ml-[7px]'],
  ['edge', 'w-[40px] ml-[9px]'],
  ['word', 'w-[40px] ml-[9px]'],
  ['wps', 'w-[40px] ml-[9px]'],
  ['qq', 'w-[40px] ml-[9px]'],
  ['obs', 'w-[48px] ml-[5px] bg-[#4a4a4a]'],
  ['gear', 'w-[40px] ml-[5px]'],
];

const AppIcon: React.FC<{ name: string }> = ({ name }) => {
  if (name === 'folder') return <svg width="22" height="24" viewBox="0 0 22 24"><path d="M2 1H9V6H2Z" fill="#d99a24" /><path d="M2 5H20V21H2Z" fill="#f5c244" /><path d="M6 16H16V23H6Z" fill="#4a8ed0" /></svg>;
  if (name === 'edge') return <svg width="24" height="24" viewBox="0 0 24 24"><circle cx="12" cy="12" r="11" fill="#1b8fc9" /><path d="M4 16c0-6 5-9 9-9 4 0 7 2 8 6-1 1-3 1-6 1-2-3-6-1-4 3 1 2 5 3 9 1-3 5-9 5-12 3-2-1-4-3-4-5z" fill="#41d5a0" /></svg>;
  if (name === 'word') return <div className="relative w-[24px] h-[24px] rounded-[2px] bg-[#185abd] flex items-center pl-[1px]"><span className="w-[13px] h-[13px] bg-[#103f91] text-white text-[10px] font-bold leading-[13px] text-center">W</span><div className="absolute right-0 top-0 bottom-0 w-[6px] bg-[#41a5ee]" /></div>;
  if (name === 'wps') return <span className="text-[24px] font-black italic leading-none text-[#d8322c] [font-family:'Liberation_Sans',sans-serif]">W</span>;
  if (name === 'qq') return <div className="w-[24px] h-[26px] bg-white rounded-[4px] flex items-center justify-center"><svg width="18" height="22" viewBox="0 0 18 22"><ellipse cx="9" cy="9" rx="7" ry="8" fill="#111" /><ellipse cx="9" cy="15" rx="6" ry="6" fill="#eee" stroke="#111" /><path d="M4 12h10v3H4z" fill="#e0342c" /><path d="M6 8h6l-3 2z" fill="#f5b400" /></svg></div>;
  if (name === 'obs') return <div className="relative"><svg width="24" height="26" viewBox="0 0 24 26"><circle cx="12" cy="13" r="11" fill="#222" stroke="#ddd" /><circle cx="8" cy="10" r="3" fill="none" stroke="#eee" strokeWidth="2" /><circle cx="16" cy="10" r="3" fill="none" stroke="#eee" strokeWidth="2" /><circle cx="12" cy="18" r="3" fill="none" stroke="#eee" strokeWidth="2" /></svg><div className="absolute -right-[2px] bottom-0 w-[13px] h-[13px] rounded-full bg-[#f00000]" /></div>;
  return <Settings size={22} className="text-white" strokeWidth={2.2} />;
};

const Taskbar = () => (
  <div className="h-[40px] shrink-0 bg-[#201e1d] flex items-stretch text-white">
    <div className="w-[48px] flex items-center justify-center">
      <svg width="18" height="18" viewBox="0 0 18 18" fill="#fff"><path d="M0 2.500L7.500 1.500V8.500H0ZM8.500 1.300L18 0V8.500H8.500ZM0 9.500H7.500V16.500L0 15.500ZM8.500 9.500H18V18L8.500 16.700Z" /></svg>
    </div>
    <div className="w-[48px] flex items-center justify-center"><Search size={24} strokeWidth={1.8} className="-scale-x-100" /></div>
    <div className="w-[48px] flex items-center justify-center">
      <svg width="18" height="22" viewBox="0 0 18 22" fill="none" stroke="#fff"><path d="M3 1H13M3 21H13M3 7H12V15H3ZM15 7V15" /><path d="M15 9h3v4h-3" fill="#fff" /></svg>
    </div>
    {RUNNING.map(([n, c]) => (
      <div key={n} className={`relative flex items-center justify-center ${c}`}>
        <AppIcon name={n} />
        {n !== 'folder' && <div className="absolute left-0 right-0 bottom-0 h-[2px] bg-[#76b9ed]" />}
      </div>
    ))}
    <div className="ml-auto flex items-center">
      <svg width="16" height="18" viewBox="0 0 16 18" fill="none" stroke="#fff"><path d="M4 12l7-10 3 2-7 10-3 1zM1 16c1-3 3-4 4-2" /></svg>
      <div className="ml-[12px] mr-[7px] w-[62px] flex flex-col items-center text-[12px] leading-[20px] whitespace-nowrap">
        <span>21:41</span><span>2024/4/28</span>
      </div>
    </div>
  </div>
);

export default function App() {
  return (
    <div className="w-[1920px] h-[1080px] flex flex-col overflow-hidden bg-[#e6e6e6] [font-family:'Noto_Sans','Noto_Sans_CJK_SC',sans-serif]">
      <TitleBar />
      <Ribbon />
      <div className="flex-1 min-h-0 flex">
        <DocArea />
        <TaskPane />
      </div>
      <StatusBar />
      <Taskbar />
    </div>
  );
}
